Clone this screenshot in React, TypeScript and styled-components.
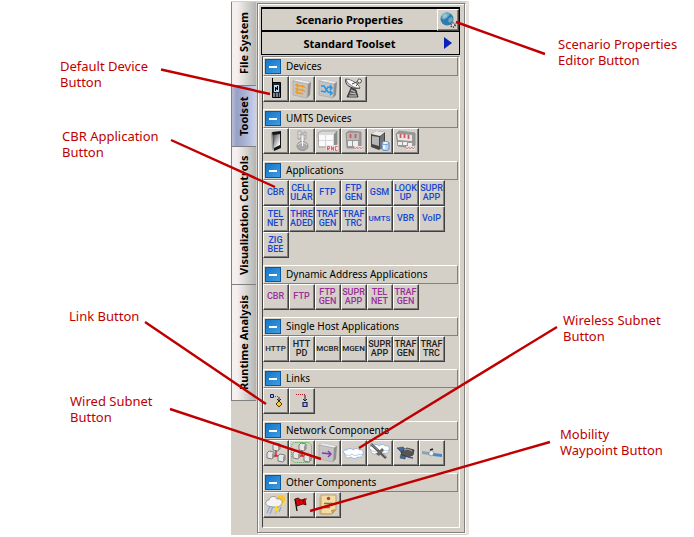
import React from "react";
import styled, { createGlobalStyle, css } from "styled-components";

const GlobalStyle = createGlobalStyle`
  * { box-sizing: border-box; }
  body { margin: 0; background: #fff; }
  button { font: inherit; color: inherit; }
`;

const uiFont = `"Noto Sans", "Open Sans", sans-serif`;
const toolFont = `Roboto, "Liberation Sans", sans-serif`;
const face = "#d4d0c8";

const Figure = styled.main`
  display: grid;
  grid-template-columns: minmax(231px, 1fr) 238px minmax(225px, 1fr);
  padding-top: 1px;
  overflow: hidden;
  font-family: ${uiFont};
`;

const NoteColumn = styled.aside`
  position: relative;
`;

const Note = styled.p<{ $top: number; $left?: number; $right?: number }>`
  position: absolute;
  top: ${(p) => p.$top}px;
  ${(p) => (p.$left !== undefined ? css`left: ${p.$left}px;` : css`left: calc(100% - ${p.$right}px);`)}
  margin: 0;
  color: #c00000;
  font: 13px/16px ${uiFont};
  white-space: pre;
`;

const Window = styled.div`
  position: relative;
  display: grid;
  grid-template-columns: 25px 1fr 3px;
  min-height: 534px;
  background: ${face};
`;

const Callouts = styled.svg`
  position: absolute;
  top: -1px;
  left: -231px;
  overflow: visible;
  pointer-events: none;
  stroke: #c00000;
  stroke-width: 2.4;
`;

const WindowEdge = styled.div`
  background: #e8e1dc;
`;

const Tabs = styled.nav`
  display: flex;
  flex-direction: column;
  padding-top: 1px;
`;

const Tab = styled.button<{ $length: number; $selected?: boolean }>`
  height: ${(p) => p.$length}px;
  padding: 0;
  border: 0;
  border-left: 1px solid #808080;
  border-bottom: 1px solid #808080;
  color: #000;
  background: ${(p) =>
    p.$selected
      ? "linear-gradient(90deg, #b9bdd4, #969fc5 20%, #aab3d6 55%, #c9cfe8 95%)"
      : "linear-gradient(90deg, #f6eff0 20%, #dedcd9 50%, #b4b4b2)"};
  font: bold 11px/24px ${uiFont};
  writing-mode: vertical-rl;
  text-orientation: sideways;
  span { display: block; rotate: 180deg; }
`;

const Dock = styled.section`
  margin: 2px 1px 2px 1px;
  padding: 3px 4px 4px 3px;
  border: 1px solid #808080;
  box-shadow: inset 1px 1px #fff, 1px 1px #fff;
  display: flex;
  flex-direction: column;
`;

const TitleRow = styled.header`
  display: flex;
  height: 24px;
  border: 1px solid #000;
  box-shadow: inset 0 1px #000;
  & + & { box-shadow: none; }
`;

const Title = styled.h1`
  flex: 1;
  margin: 0;
  text-align: center;
  font: bold 11px/23px ${uiFont};
`;

const raised = css`
  border: 1px solid;
  border-color: #fff #404040 #404040 #fff;
  box-shadow: inset -1px -1px #808080;
`;

const GlobeButton = styled.button`
  ${raised}
  display: grid;
  place-items: center;
  width: 22px;
  height: 22px;
  margin-top: 1px;
  padding: 0;
  background: ${face};
`;

const MenuButton = styled.button`
  display: grid;
  place-items: center;
  width: 22px;
  padding: 0;
  border: 0;
  background: none;
`;

const Toolbox = styled.div`
  flex: 1;
  margin: 1px 0 0 1px;
  padding-right: 1px;
  border: 1px solid;
  border-color: #808080 #fff #fff #404040;
`;

const Group = styled.section`
  padding-bottom: 7px;
`;

const GroupHeader = styled.h2`
  display: flex;
  align-items: center;
  gap: 5px;
  height: 19px;
  margin: 0;
  padding-left: 1px;
  border: 1px solid;
  border-color: #fff #808080 #808080 #fff;
  font: 10px/17px ${uiFont};
`;

const Collapse = styled.button`
  display: grid;
  place-items: center;
  width: 16px;
  height: 15px;
  padding: 0;
  border: 1px solid #0a58a5;
  background: linear-gradient(135deg, #1677c8, #3e9be0);
`;

const Grid = styled.div`
  display: flex;
  flex-wrap: wrap;
`;

const Tool = styled.button<{ $color?: string; $small?: boolean }>`
  ${raised}
  display: grid;
  place-items: center;
  width: 26px;
  height: 26px;
  padding: 0 1px 1px 0;
  background: ${face};
  color: ${(p) => p.$color};
  font: 500 ${(p) => (p.$small ? 8 : 9)}px/9px ${toolFont};
  text-align: center;
  white-space: pre;
  overflow: hidden;
`;

const blue = "#1547d0";
const purple = "#9b2d9b";
const dark = "#222222";

const Icon = ({ children }: { children: React.ReactNode }) => (
  <svg width="23" height="23" viewBox="0 0 23 23" fill="none" aria-hidden="true">
    {children}
  </svg>
);

const Box = ({ color, d }: { color: string; d: string }) => (
  <Icon>
    <path d="m3 4 4-2 14 3-3 2Z" fill="#ececec" stroke="#b5b5b5" strokeWidth=".6" />
    <path d="m18 7 3-2-1 13-3 3Z" fill="#8d8d8d" />
    <path d="m3 4 15 3-1 14-14-3Z" fill="#c6c3c3" stroke="#a3a3a3" strokeWidth=".6" />
    <path d={d} stroke={color} strokeWidth="1.5" />
  </Icon>
);

const Phone = () => (
  <Icon>
    <path d="M8.500 1v6" stroke="#000" />
    <path d="M8.500 5.500h8v15h-8Z" fill="#1c2733" stroke="#000" />
    <path d="M10 8h5v7h-5Z" fill="#b7dcf4" />
    <path d="M11.500 14v-4l2 3v-4" stroke="#000" />
    <path d="M9 17h7M9 19h7" stroke="#ddd" strokeDasharray="2 1" />
  </Icon>
);

const Dish = () => (
  <Icon>
    <path d="m9 11 5 2 2 7H5Z" fill="#5c5c5c" stroke="#222" strokeWidth=".8" />
    <path d="m9 13 4 2m-5 1 6 1m-7 2h8" stroke="#ccc" />
    <path d="M4 2c-2 4 3 11 14 9L4 2Z" fill="#d5d5d5" stroke="#333" />
    <path d="M4 2c5 0 13 5 14 9-5 1-13-4-14-9Z" fill="#fff" stroke="#555" strokeWidth=".8" />
    <path d="m10 7 7-3m-3 5 4-5" stroke="#444" />
    <circle cx="17.500" cy="4" r="2" fill="#eee" stroke="#333" strokeWidth=".8" />
  </Icon>
);

const Handset = () => (
  <Icon>
    <defs>
      <linearGradient id="screen" x1="0" y1="0" x2="1" y2="1">
        <stop stopColor="#444" />
        <stop offset=".8" stopColor="#f5f5f5" />
      </linearGradient>
    </defs>
    <path d="m8 3 9-1v17l-7 3Z" fill="#151515" />
    <path d="m9 6 7-1v11l-6 3Z" fill="url(#screen)" />
    <path d="m8 3 2 19-2-2L7 4Z" fill="#999" />
  </Icon>
);

const Antenna = () => (
  <Icon>
    <path d="M8 2h3v8H8zM14 3h2v7h-2z" fill="#e4e4e4" stroke="#999" strokeWidth=".8" />
    <path d="m9 6 6-3M8 10l8-4" stroke="#aaa" />
    <path d="M11 6h3v11h-3z" fill="#f1f1f1" stroke="#a0a0a0" strokeWidth=".7" />
    <ellipse cx="12.500" cy="17" rx="5.500" ry="4.500" fill="#aaa" stroke="#888" strokeWidth=".8" />
    <path d="M8 16c1-3 8-3 9 0" stroke="#ddd" />
    <path d="M12 9h1v8h-1z" fill="#fff" />
  </Icon>
);

const Rack = ({ kind }: { kind: "rnc" | "wide" | "small" }) => {
  if (kind === "rnc") {
    return (
      <Icon>
        <path d="m2 4 4-2h15v13l-3 3H3Z" fill="#d9d9d9" stroke="#999" strokeWidth=".8" />
        <path d="m18 5 3-3v13l-3 3Z" fill="#8c8c8c" />
        <path d="M3 6h6v5H3zm7 0h7v5h-7zm-7 6h6v5H3zm7 0h7v4h-7z" fill="#fafafa" />
        <path d="M10 16h12v6H10z" fill="#f0e3e2" />
        <path d="M11.500 21.500v-4h2v2h-2l2 2m2 0v-4l2 4v-4m4 0h-2v4h2" stroke="#cf4a50" strokeWidth=".8" />
      </Icon>
    );
  }
  const wide = kind === "wide";
  return (
    <Icon>
      <path d={wide ? "m2 5 3-3 16 2v12l-2 3-15-2Z" : "m4 4 3-2 12 1v14l-2 2H5Z"} fill="#999" stroke="#8c8c8c" strokeWidth=".8" />
      <path d={wide ? "m3 5 15 1v6L4 11Z" : "M5 4h12v7H5z"} fill={wide ? "#ebe6e5" : "#bcb5b5"} />
      <path d={wide ? "M6.500 5v4m4-4v4m4-3v4" : "M8.500 5v4m5-4v4"} stroke="#c85b60" strokeWidth="1.800" />
      <path d={wide ? "M4 13h4v3H4zm5 0h4v3H9zm5 1h4v3h-4z" : "M6 12h4v5H6zm5 0h5v5h-5z"} fill="#efefef" />
      <path d="M12 17h9v4h-9z" fill="#e7dcda" />
      <path d="m12 18 1 2 2-2 1 2 2-2 1 2 2-2" stroke="#db8585" strokeWidth=".9" />
    </Icon>
  );
};

const Server = () => (
  <Icon>
    <path d="m3 5 5-3 9 1v14l-6 4-8-3Z" fill="#444" />
    <path d="m3 5 5-3 9 1-5 4Z" fill="#e9e9e9" />
    <path d="m4 7 7 1v9l-7-2Z" fill="#b5b5b5" />
    <path d="m12 8 4-4v13l-4 3Z" fill="#737373" />
    <path d="M14 14v6c0 2 7 2 7 0v-6" fill="#b8d3f6" stroke="#5788c9" />
    <ellipse cx="17.500" cy="14" rx="3.500" ry="1.500" fill="#f7fbff" stroke="#6a94cb" />
    <path d="M16 16v4" stroke="#fff" strokeWidth="1.500" />
  </Icon>
);

const Link = ({ diamond }: { diamond?: boolean }) => (
  <Icon>
    {diamond ? (
      <>
        <path d="M6.500 5.500h3v3h-3z" fill="#9fb4f2" stroke="#17215e" />
        <path d="M11 7.500h4" stroke="#a0303a" strokeDasharray="1 1" />
        <path d="m15 12 3 3-3 3-3-3Z" fill="#ffcb20" stroke="#493600" />
        <path d="M15 8v4m-2-2 2 2 2-2" stroke="#222" />
      </>
    ) : (
      <>
        <path d="M6 5.500h9" stroke="#c40b20" strokeDasharray="1 1" />
        <path d="M15 6v6m-2-2 2 2 2-2" stroke="#222" />
        <path d="M13 13.500h4v4h-4z" fill="#9fb4f2" stroke="#17215e" strokeWidth="1.200" />
      </>
    )}
  </Icon>
);

const Cube = ({ x, y }: { x: number; y: number }) => (
  <>
    <path d={`m${x} ${y + 2} 2-2 5 1v5l-2 2-5-1Z`} fill="#e6e6e6" stroke="#666" strokeWidth=".8" />
    <path d={`m${x + 5} ${y + 3}v5l2-2V${y + 1}Z`} fill="#999" />
  </>
);

const Hierarchy = ({ dotted }: { dotted?: boolean }) => (
  <Icon>
    {dotted && <rect x="1.500" y="1.500" width="20" height="20" rx="4" stroke="#21bd25" strokeDasharray="1 1" />}
    <path d="M12 8v7H8m4 0h4" stroke="#d51c28" strokeWidth="1.400" />
    <Cube x={9} y={2} />
    <Cube x={3} y={10} />
    <Cube x={14} y={13} />
  </Icon>
);

const Cloud = () => (
  <>
    <path
      d="M3 13c-3-2-1-5 2-4 1-2 5-2 6 0 2-2 5-2 6 0 3-1 5 1 4 4 0 3-3 4-5 3-2 2-5 2-7 0-3 2-6 1-6-3Z"
      fill="#fff"
      stroke="#93b2df"
    />
    <path d="M3 13c2 2 5 2 7 0 2 2 5 2 7 0 1 1 3 1 4 0" stroke="#b5cae8" />
  </>
);

const CloudDish = () => (
  <Icon>
    <g transform="translate(0 -4)"><Cloud /></g>
    <path d="m3 3 15 14" stroke="#555" strokeWidth="2.600" />
    <path d="m3 3 7 6m4 3 5 5" stroke="#999" />
    <path d="m8 13 6-6 2 2-5 6Z" fill="#666" />
  </Icon>
);

const Aircraft = () => (
  <Icon>
    <path d="m3 7 6-1 3 3-5 2Zm4 6 5 1-1 4-5-1Z" fill="#41689a" stroke="#344456" strokeWidth=".6" />
    <path d="m7 11 6-4 7 2-1 5-5 2-6-2Z" fill="#555" stroke="#333" strokeWidth=".8" />
    <path d="m10 9 4-1 4 2" stroke="#aaa" />
    <path d="m14 16 5 1" stroke="#365d93" strokeWidth="1.500" />
  </Icon>
);

const Satellite = () => (
  <Icon>
    <path d="m2 10 7 1v3l-7-1Z" fill="#86a4ba" />
    <path d="m13 12 9 1v3l-9-1Z" fill="#438bc4" />
    <path d="m9 11 3-2 2 3-2 3-3-1Z" fill="#eee" stroke="#888" strokeWidth=".7" />
    <path d="m10 9 3-1" stroke="#222" strokeWidth="1.500" />
  </Icon>
);

const Weather = () => (
  <Icon>
    <path d="m14 1 1 2 3-2 1 3 3 0-1 3 2 2-3 1v3l-4-2" fill="#ffd65a" />
    <circle cx="17" cy="6" r="4" fill="#f8c62e" />
    <path d="m6 13-3 7m6-7-3 8m8-7-3 7m6-7-2 5" stroke="#8fa8d8" strokeWidth="1.400" />
    <path d="M4 13c-4-2-2-6 1-6 0-4 7-5 8-1 4-1 7 3 4 6-2 3-10 2-13 1Z" fill="#f4f4f4" stroke="#8a8a8a" strokeWidth=".8" />
    <path d="m12 13-2 4h2l-2 5 5-7h-2l1-2Z" fill="#ffdf17" />
  </Icon>
);

const Flag = () => (
  <Icon>
    <path d="m5 6 2 12" stroke="#111" strokeWidth="1.300" />
    <path d="m5 6 3-1 3 2 4-1 1 6-3-1-3 1-3 1Z" fill="#e00008" stroke="#420000" strokeWidth=".8" />
    <path d="M14 6h3M9 7l1 4m3-4 1 4" stroke="#500" strokeWidth=".8" />
  </Icon>
);

const Paper = () => (
  <Icon>
    <path d="M5 2h15v15l-4 4H5Z" fill="#f4dca2" stroke="#b3935b" strokeWidth=".8" />
    <path d="m16 21 4-5-5 1Z" fill="#c39c50" />
    <path d="M8 10.500h9M8 14.500h6" stroke="#866e42" strokeWidth="1.600" />
    <circle cx="12.500" cy="5.500" r="1.700" fill="#a34545" />
    <path d="M4 4v17h11" stroke="#caa864" />
  </Icon>
);

const Globe = () => (
  <svg width="20" height="20" viewBox="0 0 20 20" fill="none" aria-hidden="true">
    <circle cx="9" cy="9" r="6.500" fill="#2e7bae" />
    <path d="M4 5c2-3 5-3 8-2l-1 3-3 1-2 3-3-2Zm7 3 3-1 1 3-3 3-2-2Z" fill="#68a9bd" />
    <circle cx="7" cy="6" r="2.500" fill="#a6d8ee" opacity=".6" />
    <circle cx="15" cy="15" r="2" fill="#ddd" stroke="#222" strokeDasharray="1 1" strokeWidth="1.500" />
  </svg>
);

type Item = string | { name: string; icon: React.ReactNode };
const groups: { title: string; color?: string; items: Item[] }[] = [
  {
    title: "Devices",
    items: [
      { name: "Default device", icon: <Phone /> },
      { name: "Hub", icon: <Box color="#f19b22" d="m7 8 7 2-2-2m-5 4 7 2-2-2m-6 3 7 2M8 7 6 8l2 2m0 1-2 1 2 2m0 0-2 1 2 2" /> },
      { name: "Switch", icon: <Box color="#2298e8" d="M5 9h3l4 6 4 1M5 14l4 1 3-5 4 1m-2-3 2 3-2 2m0 1 2 2-2 2" /> },
      { name: "Satellite dish", icon: <Dish /> },
    ],
  },
  {
    title: "UMTS Devices",
    items: [
      { name: "Handset", icon: <Handset /> },
      { name: "Antenna", icon: <Antenna /> },
      { name: "RNC", icon: <Rack kind="rnc" /> },
      { name: "SGSN", icon: <Rack kind="small" /> },
      { name: "HLR", icon: <Server /> },
      { name: "GGSN", icon: <Rack kind="wide" /> },
    ],
  },
  {
    title: "Applications",
    color: blue,
    items: ["CBR", "CELL\nULAR", "FTP", "FTP\nGEN", "GSM", "LOOK\nUP", "SUPR\nAPP", "TEL\nNET", "THRE\nADED", "TRAF\nGEN", "TRAF\nTRC", "UMTS", "VBR", "VoIP", "ZIG\nBEE"],
  },
  {
    title: "Dynamic Address Applications",
    color: purple,
    items: ["CBR", "FTP", "FTP\nGEN", "SUPR\nAPP", "TEL\nNET", "TRAF\nGEN"],
  },
  {
    title: "Single Host Applications",
    color: dark,
    items: ["HTTP", "HTT\nPD", "MCBR", "MGEN", "SUPR\nAPP", "TRAF\nGEN", "TRAF\nTRC"],
  },
  {
    title: "Links",
    items: [
      { name: "Link", icon: <Link diamond /> },
      { name: "Point link", icon: <Link /> },
    ],
  },
  {
    title: "Network Components",
    items: [
      { name: "Hierarchy", icon: <Hierarchy /> },
      { name: "Grouped hierarchy", icon: <Hierarchy dotted /> },
      { name: "Wired subnet", icon: <Box color="#8a35b8" d="m6 12 9 1m-3-3 3 3-3 3" /> },
      { name: "Wireless subnet", icon: <Icon><Cloud /></Icon> },
      { name: "Satellite subnet", icon: <CloudDish /> },
      { name: "Satellite", icon: <Aircraft /> },
      { name: "Orbiting satellite", icon: <Satellite /> },
    ],
  },
  {
    title: "Other Components",
    items: [
      { name: "Weather", icon: <Weather /> },
      { name: "Mobility waypoint", icon: <Flag /> },
      { name: "Note", icon: <Paper /> },
    ],
  },
];

const wideLabels = ["UMTS", "MCBR", "MGEN", "HTTP"];

export default function App() {
  return (
    <>
      <GlobalStyle />
      <Figure>
        <NoteColumn>
          <Note $top={57} $right={171}>{"Default Device\nButton"}</Note>
          <Note $top={127} $right={169}>{"CBR Application\nButton"}</Note>
          <Note $top={307} $right={162}>Link Button</Note>
          <Note $top={392} $right={161}>{"Wired Subnet\nButton"}</Note>
        </NoteColumn>
        <Window>
          <Tabs aria-label="Panels">
            <Tab $length={84}><span>File System</span></Tab>
            <Tab $length={61} $selected><span>Toolset</span></Tab>
            <Tab $length={138}><span>Visualization Controls</span></Tab>
            <Tab $length={116}><span>Runtime Analysis</span></Tab>
          </Tabs>
          <Dock>
            <TitleRow>
              <Title>Scenario Properties</Title>
              <GlobeButton aria-label="Edit scenario properties"><Globe /></GlobeButton>
            </TitleRow>
            <TitleRow>
              <Title>Standard Toolset</Title>
              <MenuButton aria-label="Choose toolset">
                <svg width="8" height="12" viewBox="0 0 8 12" aria-hidden="true"><path d="m0 0 8 6-8 6Z" fill="#0b22b8" /></svg>
              </MenuButton>
            </TitleRow>
            <Toolbox>
              {groups.map((group) => (
                <Group key={group.title}>
                  <GroupHeader>
                    <Collapse aria-label={`Collapse ${group.title}`}>
                      <svg width="8" height="2" aria-hidden="true"><path d="M0 0h8v2H0Z" fill="#fff" /></svg>
                    </Collapse>
                    {group.title}
                  </GroupHeader>
                  <Grid>
                    {group.items.map((item) =>
                      typeof item === "string" ? (
                        <Tool key={item} $color={group.color} $small={wideLabels.includes(item)}>{item}</Tool>
                      ) : (
                        <Tool key={item.name} aria-label={item.name}>{item.icon}</Tool>
                      ),
                    )}
                  </Grid>
                </Group>
              ))}
            </Toolbox>
          </Dock>
          <WindowEdge />
          <Callouts width="694" height="537" viewBox="0 0 694 537" aria-hidden="true">
            <path d="M161 69.500 270 94M171 140l104 47M145 322l121 82M170 409l151 50M456 22l89 32M557 327 359 448M550 442 310 511" />
          </Callouts>
        </Window>
        <NoteColumn>
          <Note $top={35} $left={89}>{"Scenario Properties\nEditor Button"}</Note>
          <Note $top={311} $left={94}>{"Wireless Subnet\nButton"}</Note>
          <Note $top={425} $left={91}>{"Mobility\nWaypoint Button"}</Note>
        </NoteColumn>
      </Figure>
    </>
  );
}
